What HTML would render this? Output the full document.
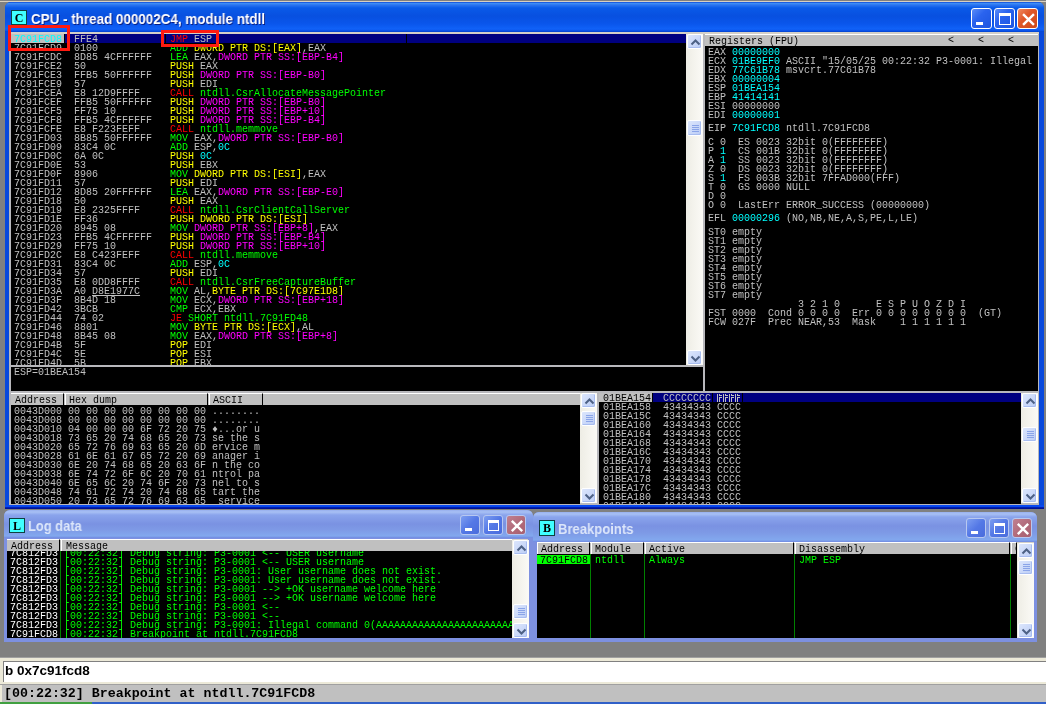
<!DOCTYPE html><html><head><meta charset="utf-8"><style>
*{margin:0;padding:0}
html,body{width:1046px;height:704px;overflow:hidden;background:#808080;position:relative}
div,pre,svg{position:absolute}
div,pre{will-change:transform}
.t{font-family:"Liberation Mono",monospace;font-size:10px;line-height:9px;color:#c0c0c0;white-space:pre;will-change:transform;-webkit-text-stroke:0px currentColor}
.t span{position:static}
.k{color:#000}.r{color:#ff0000}.gr{color:#00ff00}.y{color:#ffff00}.m{color:#ff00ff}.c{color:#00ffff}.w{color:#fff}
.u{text-decoration:underline}.tr{color:transparent}
.blk{background:#000}
.hdr{background:#c0c0c0;border-top:1px solid #fff;box-sizing:border-box;font-family:"Liberation Mono",monospace;font-size:10px;line-height:11px;padding-top:1px;color:#000;white-space:pre}
.hsep{background:#000;width:1px}
.btn{border:1px solid #fff;border-radius:3px;box-sizing:border-box}
.btn.act{background:linear-gradient(135deg,#5a8cf8 0%,#2a63ee 40%,#1d55e0 100%)}
.btn.act.cl{background:linear-gradient(135deg,#f08a60 0%,#e0582a 40%,#cc4a1a 100%)}
.btn.ina{background:linear-gradient(135deg,#7d9ef0 0%,#5478e6 50%,#4a6cdc 100%);border-color:#b8c8f0}
.btn.ina.cl{background:linear-gradient(135deg,#c08090 0%,#b06878 60%,#a86070 100%)}
.sb{background:linear-gradient(90deg,#eeede5,#fbfaf6)}
.sbb{background:linear-gradient(135deg,#dce6fc,#bccdf6);border:1px solid #fff;border-radius:2px;box-sizing:border-box;box-shadow:inset -1px -1px 0 #a8bdf0}
.ttl{font-family:"Liberation Sans",sans-serif;font-weight:bold;font-size:13px;color:#fff;white-space:pre}
.ico{background:#40ffff;border:1px solid #104040;box-sizing:border-box;font-family:"Liberation Serif",serif;font-weight:bold;font-size:12px;line-height:13px;padding-top:1px;text-align:center;color:#000}
</style></head><body>
<div style="left:0;top:1px;width:1046px;height:1px;background:#d8d0c0"></div><div style="left:5px;top:2px;width:1039px;height:507px;background:#0848dc;border-radius:6px 6px 0 0"></div><div style="left:5px;top:2px;width:1039px;height:30px;border-radius:6px 6px 0 0;background:linear-gradient(180deg,#0a46d8 0px,#3d8cf5 1.5px,#2a74f0 3px,#0a5ae8 6px,#0850e0 14px,#0a56ec 22px,#1062f8 27px,#0a50e6 29px,#0040c8 30px)"></div><div class="ico" style="left:11px;top:10px;width:16px;height:15px">C</div><div class="ttl" style="left:31px;top:11px;font-size:14.5px;transform:scaleX(0.925);transform-origin:0 0;text-shadow:1px 1px 0 #0a1e80">CPU - thread 000002C4, module ntdll</div><div class="btn act" style="left:971px;top:8px;width:21px;height:21px"><div style="position:absolute;left:4px;top:13px;width:7px;height:3px;background:#fff"></div></div><div class="btn act" style="left:994px;top:8px;width:21px;height:21px"><div style="position:absolute;left:4px;top:4px;width:12px;height:12px;border:1.5px solid #fff;border-top-width:3px;box-sizing:border-box"></div></div><div class="btn act cl" style="left:1017px;top:8px;width:21px;height:21px"><svg width="21" height="21" style="position:absolute;left:0;top:0"><path d="M5.04 5.04 L15.96 15.96 M15.96 5.04 L5.04 15.96" stroke="#fff" stroke-width="2.4" fill="none"/></svg></div><div style="left:9px;top:32px;width:1030px;height:473px;background:#b8b8bc"></div><div style="left:5px;top:505px;width:1039px;height:4px;background:linear-gradient(180deg,#0848f0 0,#0848f0 1.5px,#0020b0 2.5px,#000a88 4px)"></div><div style="left:9px;top:32px;width:1030px;height:2px;background:#d4d0c8"></div><div class="blk" style="left:11px;top:34px;width:675px;height:331px"></div><div style="left:11px;top:34px;width:53px;height:9px;background:#c0c0c0"></div><div style="left:65px;top:34px;width:621px;height:9px;background:#000080"></div><div style="left:165px;top:34px;width:1px;height:9px;background:#000"></div><div style="left:406px;top:34px;width:1px;height:9px;background:#000"></div><pre class="t" style="left:14px;top:34px;padding-top:1px"><span class="c">7C91FCD8</span>  FFE4            <span class="r">JMP</span> ESP</pre><div style="left:10px;top:43px;width:676px;height:322px;overflow:hidden"><pre class="t" style="left:4px;top:0px;padding-top:1px">7C91FCD9  0100            <span class="gr">ADD</span> <span class="y">DWORD PTR DS:[EAX]</span>,EAX
7C91FCDC  8D85 4CFFFFFF   <span class="gr">LEA</span> EAX,<span class="m">DWORD PTR SS:[EBP-B4]</span>
7C91FCE2  50              <span class="y">PUSH</span> EAX
7C91FCE3  FFB5 50FFFFFF   <span class="y">PUSH</span> <span class="m">DWORD PTR SS:[EBP-B0]</span>
7C91FCE9  57              <span class="y">PUSH</span> EDI
7C91FCEA  E8 12D9FFFF     <span class="r">CALL</span> <span class="gr">ntdll.CsrAllocateMessagePointer</span>
7C91FCEF  FFB5 50FFFFFF   <span class="y">PUSH</span> <span class="m">DWORD PTR SS:[EBP-B0]</span>
7C91FCF5  FF75 10         <span class="y">PUSH</span> <span class="m">DWORD PTR SS:[EBP+10]</span>
7C91FCF8  FFB5 4CFFFFFF   <span class="y">PUSH</span> <span class="m">DWORD PTR SS:[EBP-B4]</span>
7C91FCFE  E8 F223FEFF     <span class="r">CALL</span> <span class="gr">ntdll.memmove</span>
7C91FD03  8B85 50FFFFFF   <span class="gr">MOV</span> EAX,<span class="m">DWORD PTR SS:[EBP-B0]</span>
7C91FD09  83C4 0C         <span class="gr">ADD</span> ESP,<span class="c">0C</span>
7C91FD0C  6A 0C           <span class="y">PUSH</span> <span class="c">0C</span>
7C91FD0E  53              <span class="y">PUSH</span> EBX
7C91FD0F  8906            <span class="gr">MOV</span> <span class="y">DWORD PTR DS:[ESI]</span>,EAX
7C91FD11  57              <span class="y">PUSH</span> EDI
7C91FD12  8D85 20FFFFFF   <span class="gr">LEA</span> EAX,<span class="m">DWORD PTR SS:[EBP-E0]</span>
7C91FD18  50              <span class="y">PUSH</span> EAX
7C91FD19  E8 2325FFFF     <span class="r">CALL</span> <span class="gr">ntdll.CsrClientCallServer</span>
7C91FD1E  FF36            <span class="y">PUSH</span> <span class="y">DWORD PTR DS:[ESI]</span>
7C91FD20  8945 08         <span class="gr">MOV</span> <span class="m">DWORD PTR SS:[EBP+8]</span>,EAX
7C91FD23  FFB5 4CFFFFFF   <span class="y">PUSH</span> <span class="m">DWORD PTR SS:[EBP-B4]</span>
7C91FD29  FF75 10         <span class="y">PUSH</span> <span class="m">DWORD PTR SS:[EBP+10]</span>
7C91FD2C  E8 C423FEFF     <span class="r">CALL</span> <span class="gr">ntdll.memmove</span>
7C91FD31  83C4 0C         <span class="gr">ADD</span> ESP,<span class="c">0C</span>
7C91FD34  57              <span class="y">PUSH</span> EDI
7C91FD35  E8 0DD8FFFF     <span class="r">CALL</span> <span class="gr">ntdll.CsrFreeCaptureBuffer</span>
7C91FD3A  A0 <span class="u">D8E1977C</span>     <span class="gr">MOV</span> AL,<span class="y">BYTE PTR DS:[7C97E1D8]</span>
7C91FD3F  8B4D 18         <span class="gr">MOV</span> ECX,<span class="m">DWORD PTR SS:[EBP+18]</span>
7C91FD42  3BCB            <span class="gr">CMP</span> ECX,EBX
7C91FD44  74 02           <span class="r">JE</span> <span class="gr">SHORT ntdll.7C91FD48</span>
7C91FD46  8801            <span class="gr">MOV</span> <span class="y">BYTE PTR DS:[ECX]</span>,AL
7C91FD48  8B45 08         <span class="gr">MOV</span> EAX,<span class="m">DWORD PTR SS:[EBP+8]</span>
7C91FD4B  5F              <span class="y">POP</span> EDI
7C91FD4C  5E              <span class="y">POP</span> ESI
7C91FD4D  5B              <span class="y">POP</span> EBX</pre></div><div class="sb" style="left:686px;top:34px;width:17px;height:331px"><div class="sbb" style="left:1px;top:0px;width:15px;height:15px"><svg width="15" height="15" style="position:absolute;left:0;top:0"><path d="M3.5 9.5 L7.5 5.5 L11.5 9.5" stroke="#4d6185" stroke-width="2" fill="none"/></svg></div><div class="sbb" style="left:1px;top:316px;width:15px;height:15px"><svg width="15" height="15" style="position:absolute;left:0;top:0"><path d="M3.5 5.5 L7.5 9.5 L11.5 5.5" stroke="#4d6185" stroke-width="2" fill="none"/></svg></div><div class="sbb" style="left:1px;top:86px;width:15px;height:16px"><div style="position:absolute;left:4px;top:4px;width:7px;height:1px;background:#8aa4e8"></div><div style="position:absolute;left:4px;top:6px;width:7px;height:1px;background:#8aa4e8"></div><div style="position:absolute;left:4px;top:8px;width:7px;height:1px;background:#8aa4e8"></div><div style="position:absolute;left:4px;top:10px;width:7px;height:1px;background:#8aa4e8"></div></div></div><div class="blk" style="left:11px;top:367px;width:692px;height:24px"></div><pre class="t" style="left:14px;top:367px;padding-top:1px">ESP=01BEA154</pre><div class="hdr" style="left:705px;top:34px;width:333px;height:12px;padding-left:4px">Registers (FPU)</div><div style="left:948px;top:35px;font-family:'Liberation Mono',monospace;font-size:10px;line-height:11px;color:#000">&lt;</div><div style="left:978px;top:35px;font-family:'Liberation Mono',monospace;font-size:10px;line-height:11px;color:#000">&lt;</div><div style="left:1008px;top:35px;font-family:'Liberation Mono',monospace;font-size:10px;line-height:11px;color:#000">&lt;</div><div class="blk" style="left:705px;top:46px;width:333px;height:345px"></div><pre class="t" style="left:708px;top:47px;padding-top:1px">EAX <span class="c">00000000</span>
ECX <span class="c">01BE9EF0</span> ASCII &quot;15/05/25 00:22:32 P3-0001: Illegal
EDX <span class="c">77C61B78</span> msvcrt.77C61B78
EBX <span class="c">00000004</span>
ESP <span class="c">01BEA154</span>
EBP <span class="c">41414141</span>
ESI 00000000
EDI <span class="c">00000001</span></pre><pre class="t" style="left:708px;top:123px;padding-top:1px">EIP <span class="c">7C91FCD8</span> ntdll.7C91FCD8</pre><pre class="t" style="left:708px;top:137px;padding-top:1px">C 0  ES 0023 32bit 0(FFFFFFFF)
P <span class="c">1</span>  CS 001B 32bit 0(FFFFFFFF)
A <span class="c">1</span>  SS 0023 32bit 0(FFFFFFFF)
Z 0  DS 0023 32bit 0(FFFFFFFF)
S <span class="c">1</span>  FS 003B 32bit 7FFAD000(FFF)
T 0  GS 0000 NULL
D 0
O 0  LastErr ERROR_SUCCESS (00000000)</pre><pre class="t" style="left:708px;top:213px;padding-top:1px">EFL <span class="c">00000296</span> (NO,NB,NE,A,S,PE,L,LE)</pre><pre class="t" style="left:708px;top:227px;padding-top:1px">ST0 empty
ST1 empty
ST2 empty
ST3 empty
ST4 empty
ST5 empty
ST6 empty
ST7 empty
               3 2 1 0      E S P U O Z D I
FST 0000  Cond 0 0 0 0  Err 0 0 0 0 0 0 0 0  (GT)
FCW 027F  Prec NEAR,53  Mask    1 1 1 1 1 1</pre><div class="hdr" style="left:11px;top:393px;width:569px;height:12px"></div><div class="hdr" style="left:11px;top:393px;width:53px;height:12px;padding-left:4px;border-right:1px solid #000">Address</div><div class="hdr" style="left:65px;top:393px;width:143px;height:12px;padding-left:3px;border-right:1px solid #000;border-left:1px solid #fff">Hex dump</div><div class="hdr" style="left:209px;top:393px;width:54px;height:12px;padding-left:3px;border-right:1px solid #000;border-left:1px solid #fff">ASCII</div><div class="blk" style="left:11px;top:405px;width:569px;height:99px"></div><div style="left:10px;top:406px;width:570px;height:98px;overflow:hidden"><pre class="t" style="left:4px;top:0px;padding-top:1px">0043D000 00 00 00 00 00 00 00 00 ........
0043D008 00 00 00 00 00 00 00 00 ........
0043D010 04 00 00 00 6F 72 20 75 ♦...or u
0043D018 73 65 20 74 68 65 20 73 se the s
0043D020 65 72 76 69 63 65 20 6D ervice m
0043D028 61 6E 61 67 65 72 20 69 anager i
0043D030 6E 20 74 68 65 20 63 6F n the co
0043D038 6E 74 72 6F 6C 20 70 61 ntrol pa
0043D040 6E 65 6C 20 74 6F 20 73 nel to s
0043D048 74 61 72 74 20 74 68 65 tart the
0043D050 20 73 65 72 76 69 63 65  service</pre></div><div class="sb" style="left:580px;top:393px;width:17px;height:110px"><div class="sbb" style="left:1px;top:0px;width:15px;height:15px"><svg width="15" height="15" style="position:absolute;left:0;top:0"><path d="M3.5 9.5 L7.5 5.5 L11.5 9.5" stroke="#4d6185" stroke-width="2" fill="none"/></svg></div><div class="sbb" style="left:1px;top:95px;width:15px;height:15px"><svg width="15" height="15" style="position:absolute;left:0;top:0"><path d="M3.5 5.5 L7.5 9.5 L11.5 5.5" stroke="#4d6185" stroke-width="2" fill="none"/></svg></div><div class="sbb" style="left:1px;top:18px;width:15px;height:15px"><div style="position:absolute;left:4px;top:3px;width:7px;height:1px;background:#8aa4e8"></div><div style="position:absolute;left:4px;top:5px;width:7px;height:1px;background:#8aa4e8"></div><div style="position:absolute;left:4px;top:7px;width:7px;height:1px;background:#8aa4e8"></div><div style="position:absolute;left:4px;top:9px;width:7px;height:1px;background:#8aa4e8"></div></div></div><div class="blk" style="left:599px;top:393px;width:422px;height:111px"></div><div style="left:599px;top:393px;width:53px;height:9px;background:#c0c0c0"></div><div style="left:653px;top:393px;width:368px;height:9px;background:#000080"></div><div style="left:712px;top:393px;width:1px;height:9px;background:#000"></div><div style="left:742px;top:393px;width:1px;height:9px;background:#000"></div><pre class="t" style="left:603px;top:393px;padding-top:1px"><span class="k">01BEA154</span>  CCCCCCCC <span class="tr">╠╠╠╠</span></pre><svg style="left:717px;top:394px" width="26" height="8" fill="#c0c0c0"><rect x="0" y="0" width="1" height="8"/><rect x="2" y="0" width="1" height="2"/><rect x="2" y="1" width="3" height="1"/><rect x="2" y="3" width="3" height="1"/><rect x="2" y="3" width="1" height="5"/><rect x="6" y="0" width="1" height="8"/><rect x="8" y="0" width="1" height="2"/><rect x="8" y="1" width="3" height="1"/><rect x="8" y="3" width="3" height="1"/><rect x="8" y="3" width="1" height="5"/><rect x="12" y="0" width="1" height="8"/><rect x="14" y="0" width="1" height="2"/><rect x="14" y="1" width="3" height="1"/><rect x="14" y="3" width="3" height="1"/><rect x="14" y="3" width="1" height="5"/><rect x="18" y="0" width="1" height="8"/><rect x="20" y="0" width="1" height="2"/><rect x="20" y="1" width="3" height="1"/><rect x="20" y="3" width="3" height="1"/><rect x="20" y="3" width="1" height="5"/></svg><div style="left:599px;top:402px;width:422px;height:102px;overflow:hidden"><pre class="t" style="left:4px;top:0px;padding-top:1px">01BEA158  43434343 CCCC
01BEA15C  43434343 CCCC
01BEA160  43434343 CCCC
01BEA164  43434343 CCCC
01BEA168  43434343 CCCC
01BEA16C  43434343 CCCC
01BEA170  43434343 CCCC
01BEA174  43434343 CCCC
01BEA178  43434343 CCCC
01BEA17C  43434343 CCCC
01BEA180  43434343 CCCC
01BEA184  43434343 CCCC</pre></div><div class="sb" style="left:1021px;top:393px;width:17px;height:110px"><div class="sbb" style="left:1px;top:0px;width:15px;height:15px"><svg width="15" height="15" style="position:absolute;left:0;top:0"><path d="M3.5 9.5 L7.5 5.5 L11.5 9.5" stroke="#4d6185" stroke-width="2" fill="none"/></svg></div><div class="sbb" style="left:1px;top:95px;width:15px;height:15px"><svg width="15" height="15" style="position:absolute;left:0;top:0"><path d="M3.5 5.5 L7.5 9.5 L11.5 5.5" stroke="#4d6185" stroke-width="2" fill="none"/></svg></div><div class="sbb" style="left:1px;top:34px;width:15px;height:15px"><div style="position:absolute;left:4px;top:3px;width:7px;height:1px;background:#8aa4e8"></div><div style="position:absolute;left:4px;top:5px;width:7px;height:1px;background:#8aa4e8"></div><div style="position:absolute;left:4px;top:7px;width:7px;height:1px;background:#8aa4e8"></div><div style="position:absolute;left:4px;top:9px;width:7px;height:1px;background:#8aa4e8"></div></div></div><div style="left:4px;top:510px;width:529px;height:132px;background:#7d90e0;border-radius:6px 6px 0 0"></div><div style="left:4px;top:510px;width:529px;height:28px;border-radius:6px 6px 0 0;background:linear-gradient(180deg,#98b0ee 0px,#a8c0f4 2px,#8aa4ec 5px,#7a92e2 14px,#7e9ae6 20px,#82a8ee 26px,#7088e0 28px)"></div><div class="ico" style="left:9px;top:518px;width:16px;height:15px">L</div><div class="ttl" style="left:28px;top:518px;font-size:14.5px;transform:scaleX(0.89);transform-origin:0 0;color:#dce6fa">Log data</div><div class="btn ina" style="left:460px;top:515px;width:20px;height:20px"><div style="position:absolute;left:4px;top:12px;width:7px;height:3px;background:#fff"></div></div><div class="btn ina" style="left:483px;top:515px;width:20px;height:20px"><div style="position:absolute;left:4px;top:4px;width:11px;height:11px;border:1.5px solid #fff;border-top-width:3px;box-sizing:border-box"></div></div><div class="btn ina cl" style="left:506px;top:515px;width:20px;height:20px"><svg width="20" height="20" style="position:absolute;left:0;top:0"><path d="M4.8 4.8 L15.2 15.2 M15.2 4.8 L4.8 15.2" stroke="#fff" stroke-width="2.4" fill="none"/></svg></div><div style="left:8px;top:539px;width:520px;height:99px;background:#d4d0c8"></div><div class="hdr" style="left:7px;top:539px;width:505px;height:12px"></div><div class="hdr" style="left:7px;top:539px;width:53px;height:12px;padding-left:4px;border-right:1px solid #000">Address</div><div class="hdr" style="left:61px;top:539px;width:451px;height:12px;padding-left:4px;border-left:1px solid #fff">Message</div><div class="blk" style="left:7px;top:551px;width:505px;height:87px;overflow:hidden"></div><div style="left:7px;top:551px;width:505px;height:87px;overflow:hidden"><pre class="t" style="left:3px;top:-3px;padding-top:1px"><span class="w">7C812FD3</span>
<span class="w">7C812FD3</span>
<span class="w">7C812FD3</span>
<span class="w">7C812FD3</span>
<span class="w">7C812FD3</span>
<span class="w">7C812FD3</span>
<span class="w">7C812FD3</span>
<span class="w">7C812FD3</span>
<span class="w">7C812FD3</span>
<span class="w">7C91FCD8</span></pre><div style="left:53px;top:0;width:1px;height:87px;background:#008000"></div><pre class="t" style="left:57px;top:-3px;padding-top:1px"><span class="gr">[00:22:32] Debug string: P3-0001 &lt;-- USER username</span>
<span class="gr">[00:22:32] Debug string: P3-0001 &lt;-- USER username</span>
<span class="gr">[00:22:32] Debug string: P3-0001: User username does not exist.</span>
<span class="gr">[00:22:32] Debug string: P3-0001: User username does not exist.</span>
<span class="gr">[00:22:32] Debug string: P3-0001 --&gt; +OK username welcome here</span>
<span class="gr">[00:22:32] Debug string: P3-0001 --&gt; +OK username welcome here</span>
<span class="gr">[00:22:32] Debug string: P3-0001 &lt;--</span>
<span class="gr">[00:22:32] Debug string: P3-0001 &lt;--</span>
<span class="gr">[00:22:32] Debug string: P3-0001: Illegal command 0(AAAAAAAAAAAAAAAAAAAAAAAAAAAAAAAAAAAA</span>
<span class="gr">[00:22:32] Breakpoint at ntdll.7C91FCD8</span></pre></div><div class="sb" style="left:512px;top:540px;width:17px;height:98px"><div class="sbb" style="left:1px;top:0px;width:15px;height:15px"><svg width="15" height="15" style="position:absolute;left:0;top:0"><path d="M3.5 9.5 L7.5 5.5 L11.5 9.5" stroke="#4d6185" stroke-width="2" fill="none"/></svg></div><div class="sbb" style="left:1px;top:83px;width:15px;height:15px"><svg width="15" height="15" style="position:absolute;left:0;top:0"><path d="M3.5 5.5 L7.5 9.5 L11.5 5.5" stroke="#4d6185" stroke-width="2" fill="none"/></svg></div><div class="sbb" style="left:1px;top:64px;width:15px;height:15px"><div style="position:absolute;left:4px;top:3px;width:7px;height:1px;background:#8aa4e8"></div><div style="position:absolute;left:4px;top:5px;width:7px;height:1px;background:#8aa4e8"></div><div style="position:absolute;left:4px;top:7px;width:7px;height:1px;background:#8aa4e8"></div><div style="position:absolute;left:4px;top:9px;width:7px;height:1px;background:#8aa4e8"></div></div></div><div style="left:533px;top:512px;width:504px;height:130px;background:#7d90e0;border-radius:6px 6px 0 0"></div><div style="left:533px;top:512px;width:504px;height:30px;border-radius:6px 6px 0 0;background:linear-gradient(180deg,#98b0ee 0px,#a8c0f4 2px,#8aa4ec 5px,#7a92e2 14px,#7e9ae6 21px,#82a8ee 28px,#7088e0 30px)"></div><div class="ico" style="left:539px;top:520px;width:16px;height:16px">B</div><div class="ttl" style="left:558px;top:521px;font-size:14.5px;transform:scaleX(0.9);transform-origin:0 0;color:#dce6fa">Breakpoints</div><div class="btn ina" style="left:966px;top:518px;width:20px;height:20px"><div style="position:absolute;left:4px;top:12px;width:7px;height:3px;background:#fff"></div></div><div class="btn ina" style="left:989px;top:518px;width:20px;height:20px"><div style="position:absolute;left:4px;top:4px;width:11px;height:11px;border:1.5px solid #fff;border-top-width:3px;box-sizing:border-box"></div></div><div class="btn ina cl" style="left:1012px;top:518px;width:20px;height:20px"><svg width="20" height="20" style="position:absolute;left:0;top:0"><path d="M4.8 4.8 L15.2 15.2 M15.2 4.8 L4.8 15.2" stroke="#fff" stroke-width="2.4" fill="none"/></svg></div><div style="left:537px;top:542px;width:497px;height:96px;background:#d4d0c8"></div><div class="hdr" style="left:537px;top:542px;width:480px;height:12px"></div><div class="hdr" style="left:537px;top:542px;width:53px;height:12px;padding-left:3px;border-right:1px solid #000;border-left:1px solid #fff;overflow:hidden">Address</div><div class="hdr" style="left:591px;top:542px;width:53px;height:12px;padding-left:3px;border-right:1px solid #000;border-left:1px solid #fff;overflow:hidden">Module</div><div class="hdr" style="left:645px;top:542px;width:149px;height:12px;padding-left:3px;border-right:1px solid #000;border-left:1px solid #fff;overflow:hidden">Active</div><div class="hdr" style="left:795px;top:542px;width:215px;height:12px;padding-left:3px;border-right:1px solid #000;border-left:1px solid #fff;overflow:hidden">Disassembly</div><div class="hdr" style="left:1011px;top:542px;width:6px;height:12px;padding-left:3px;border-right:1px solid #000;border-left:1px solid #fff;overflow:hidden">C</div><div class="blk" style="left:537px;top:554px;width:480px;height:84px"></div><div style="left:537px;top:555px;width:53px;height:9px;background:#00ff00"></div><div style="left:590px;top:554px;width:1px;height:84px;background:#008000"></div><div style="left:644px;top:554px;width:1px;height:84px;background:#008000"></div><div style="left:794px;top:554px;width:1px;height:84px;background:#008000"></div><div style="left:1010px;top:554px;width:1px;height:84px;background:#008000"></div><pre class="t" style="left:540px;top:555px;padding-top:1px"><span class="k">7C91FCD8</span></pre><pre class="t" style="left:595px;top:555px;padding-top:1px"><span class="gr">ntdll</span></pre><pre class="t" style="left:649px;top:555px;padding-top:1px"><span class="gr">Always</span></pre><pre class="t" style="left:799px;top:555px;padding-top:1px"><span class="gr">JMP ESP</span></pre><div class="sb" style="left:1017px;top:543px;width:17px;height:95px"><div class="sbb" style="left:1px;top:0px;width:15px;height:15px"><svg width="15" height="15" style="position:absolute;left:0;top:0"><path d="M3.5 9.5 L7.5 5.5 L11.5 9.5" stroke="#4d6185" stroke-width="2" fill="none"/></svg></div><div class="sbb" style="left:1px;top:80px;width:15px;height:15px"><svg width="15" height="15" style="position:absolute;left:0;top:0"><path d="M3.5 5.5 L7.5 9.5 L11.5 5.5" stroke="#4d6185" stroke-width="2" fill="none"/></svg></div><div class="sbb" style="left:1px;top:17px;width:15px;height:15px"><div style="position:absolute;left:4px;top:3px;width:7px;height:1px;background:#8aa4e8"></div><div style="position:absolute;left:4px;top:5px;width:7px;height:1px;background:#8aa4e8"></div><div style="position:absolute;left:4px;top:7px;width:7px;height:1px;background:#8aa4e8"></div><div style="position:absolute;left:4px;top:9px;width:7px;height:1px;background:#8aa4e8"></div></div></div><div style="left:0;top:657px;width:1046px;height:47px;background:#ece9d8"></div><div style="left:0;top:657px;width:1046px;height:1px;background:#a0a0a0"></div><div style="left:3px;top:661px;width:1043px;height:21px;background:#fff;border-top:1px solid #808080;border-left:1px solid #808080;box-sizing:border-box"></div><div style="left:5px;top:663px;font-family:'Liberation Sans',sans-serif;font-weight:bold;font-size:13.5px;line-height:16px;color:#000;white-space:pre">b 0x7c91fcd8</div><div style="left:0;top:684px;width:1046px;height:1px;background:#a0a0a0"></div><div style="left:2px;top:685px;width:1044px;height:17px;background:#c0c0c0"></div><div style="left:4px;top:686px;font-family:'Liberation Mono',monospace;font-weight:bold;font-size:13.3px;line-height:15px;color:#000;white-space:pre">[00:22:32] Breakpoint at ntdll.7C91FCD8</div><div style="left:0;top:702px;width:1046px;height:2px;background:#3060c8"></div><div style="left:0;top:702px;width:92px;height:2px;background:#40a040"></div><div style="left:8px;top:25px;width:62px;height:26px;border:3px solid #ff1a10;box-sizing:border-box"></div><div style="left:161px;top:30px;width:58px;height:17px;border:3px solid #ff1a10;box-sizing:border-box"></div></body></html>
